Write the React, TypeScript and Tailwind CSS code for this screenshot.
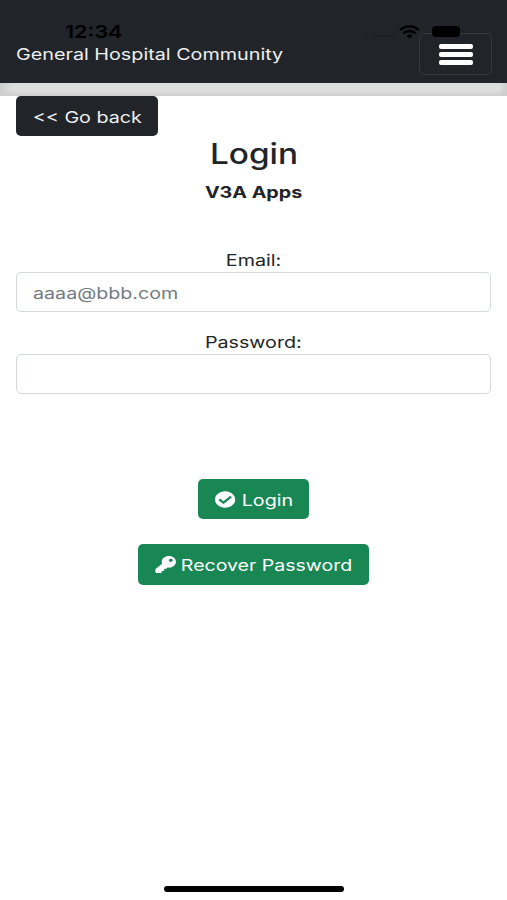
import type { ReactNode } from "react";
import { FaCheckCircle, FaKey } from "react-icons/fa";

function Wide({ children, className = "" }: { children: ReactNode; className?: string }) {
  return <span className={`inline-block whitespace-nowrap scale-x-[1.23] ${className}`}>{children}</span>;
}

function StatusBar() {
  return (
    <div className="pointer-events-none absolute inset-x-0 top-0 h-[42px] text-black">
      <Wide className="absolute left-[65px] top-[21px] origin-left text-[17.500px] leading-[22px] font-semibold">12:34</Wide>
      <div className="absolute left-[364px] top-[35px] flex gap-[5px]">
        <i className="h-[2px] w-[4px] rounded-full bg-[#1e2124]" />
        <i className="h-[2px] w-[4px] rounded-full bg-[#1e2124]" />
        <i className="h-[2px] w-[4px] rounded-full bg-[#1e2124]" />
        <i className="h-[2px] w-[4px] rounded-full bg-[#1e2124]" />
      </div>
      <svg className="absolute left-[399px] top-[25px]" width="21" height="14" viewBox="0 0 21 14" fill="none" stroke="currentColor" strokeWidth="2.5">
        <path d="M1 5Q10.500-2.400 20 5" />
        <path d="M4.300 8.300Q10.500 3.500 16.700 8.300" />
        <path d="M10.500 13.500L7.200 10.600Q10.500 8.400 13.800 10.600Z" fill="currentColor" stroke="none" />
      </svg>
      <div className="absolute left-[432px] top-[26px] h-[11px] w-[28px] rounded-[4px] bg-black" />
      <div className="absolute left-[462px] top-[29px] h-[4px] w-[1px] rounded bg-[#15181a]" />
    </div>
  );
}

function Field({ label, type, placeholder }: { label: string; type: string; placeholder?: string }) {
  return (
    <label className="block text-center">
      <span className="block h-[25px] leading-[27px]">
        <Wide>{label}</Wide>
      </span>
      <span className="block h-[40px] w-full overflow-hidden rounded-[5px] border border-[#d5d9dd] bg-white">
        <input
          type={type}
          placeholder={placeholder}
          className="block h-full w-[385px] origin-left scale-x-[1.23] pt-[2px] pl-[13px] text-[16px] outline-none placeholder:text-[#747b82]"
        />
      </span>
    </label>
  );
}

export default function App() {
  return (
    <div className="relative flex h-[900px] w-full flex-col overflow-hidden bg-white font-['Inter','Liberation_Sans',sans-serif] text-[16px] text-[#212529]">
      <header className="flex h-[83px] shrink-0 items-start justify-between bg-[#212529] pl-[16px] pr-[15px] pt-[33px]">
        <span className="pt-[9px] leading-[24px] text-[#eeeff0]">
          <Wide className="origin-left scale-x-[1.235]!">General Hospital Community</Wide>
        </span>
        <button className="flex h-[42px] w-[73px] flex-col items-center justify-center gap-[3px] rounded-[5px] border border-[#343a3e]">
          <i className="h-[5px] w-[34px] rounded-[2px] bg-white" />
          <i className="h-[5px] w-[34px] rounded-[2px] bg-white" />
          <i className="h-[5px] w-[34px] rounded-[2px] bg-white" />
        </button>
      </header>
      <div className="flex h-[13px] shrink-0 justify-between bg-linear-to-b from-[#dcdcdc] via-[#dfdfdf] to-[#d0d0d0]">
        <i className="h-full w-[14px] bg-linear-to-r from-[#cdcdcd] to-transparent" />
        <i className="h-full w-[8px] bg-linear-to-l from-[#cdcdcd] to-transparent" />
      </div>
      <main className="flex flex-col px-[16px]">
        <button className="flex h-[40px] w-[142px] items-center justify-center rounded-[5px] bg-[#212529] pt-px text-[#eeeff0]">
          <Wide>&lt;&lt; Go back</Wide>
        </button>
        <h1 className="h-[36px] text-center text-[28px] leading-[37px] font-medium">
          <Wide className="scale-x-[1.19]!">Login</Wide>
        </h1>
        <p className="mt-[8px] h-[24px] text-center leading-[24px] font-bold">
          <Wide>V3A Apps</Wide>
        </p>
        <form className="mt-[43px] flex flex-col">
          <Field label="Email:" type="email" placeholder="aaaa@bbb.com" />
          <div className="h-[17px]" />
          <Field label="Password:" type="password" />
          <button type="button" className="mt-[85px] flex h-[40px] w-[111px] items-center justify-center self-center rounded-[5px] bg-[#198754] pt-px text-white">
            <Wide>
              <span className="flex items-center gap-[5px]">
                <FaCheckCircle className="size-[17px]" />
                Login
              </span>
            </Wide>
          </button>
          <button type="button" className="mt-[25px] flex h-[41px] w-[231px] items-center justify-center self-center rounded-[5px] bg-[#198754] text-white">
            <Wide className="scale-x-[1.22]!">
              <span className="flex items-center gap-[4px]">
                <FaKey className="mb-px size-[17px]" />
                Recover Password
              </span>
            </Wide>
          </button>
        </form>
      </main>
      <StatusBar />
      <div className="mt-auto mb-[8px] ml-[164px] h-[6px] w-[180px] rounded-full bg-black" />
    </div>
  );
}
